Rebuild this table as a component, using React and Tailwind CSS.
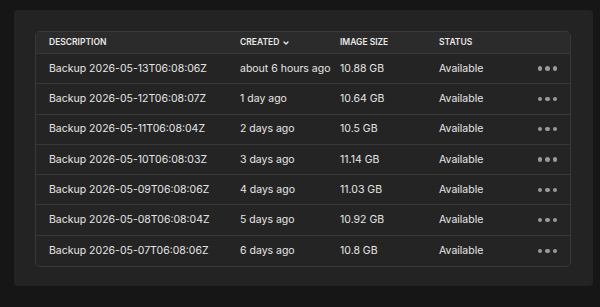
import React from "react";

const rows = [
  ["Backup 2026-05-13T06:08:06Z", "about 6 hours ago", "10.88 GB"],
  ["Backup 2026-05-12T06:08:07Z", "1 day ago", "10.64 GB"],
  ["Backup 2026-05-11T06:08:04Z", "2 days ago", "10.5 GB"],
  ["Backup 2026-05-10T06:08:03Z", "3 days ago", "11.14 GB"],
  ["Backup 2026-05-09T06:08:06Z", "4 days ago", "11.03 GB"],
  ["Backup 2026-05-08T06:08:04Z", "5 days ago", "10.92 GB"],
  ["Backup 2026-05-07T06:08:06Z", "6 days ago", "10.8 GB"],
];

function Dots() {
  return (
    <div className="flex items-center gap-[3px]">
      <span className="w-[4.5px] h-[4.5px] rounded-full bg-[#9a9a9a]" />
      <span className="w-[4.5px] h-[4.5px] rounded-full bg-[#9a9a9a]" />
      <span className="w-[4.5px] h-[4.5px] rounded-full bg-[#9a9a9a]" />
    </div>
  );
}

export default function App() {
  return (
    <div
      className="w-[600px] h-[307px] bg-[#161616] pt-[10px] pl-[14px] pr-[7px]"
      style={{ fontFamily: "Inter, 'Noto Sans', sans-serif" }}
    >
      <div className="h-[276px] rounded-[4px] bg-[#232323] pt-[21px] pl-[21px] pr-[22px]">
        <div className="rounded-[5px] border border-[#383838] bg-[#242424] overflow-hidden">
          <div className="grid grid-cols-[191px_100px_99px_1fr_auto] items-center h-[22px] pl-[13px] pr-[13px] bg-[#2b2b2b] border-b border-[#383838] text-[8.5px] font-semibold text-[#e8e8e8]">
            <div>DESCRIPTION</div>
            <div className="flex items-center gap-[3px]">
              CREATED
              <svg width="8" height="8" viewBox="0 0 24 24" fill="none" stroke="#e8e8e8" strokeWidth="4" strokeLinecap="round" strokeLinejoin="round">
                <path d="M6 9l6 6 6-6" />
              </svg>
            </div>
            <div>IMAGE SIZE</div>
            <div>STATUS</div>
            <div className="w-[20px]" />
          </div>
          {rows.map((r, i) => (
            <div
              key={i}
              className={`grid grid-cols-[191px_100px_99px_1fr_auto] items-center h-[30.3px] pl-[13px] pr-[13px] text-[10.5px] text-[#e6e6e6] ${i < rows.length - 1 ? "border-b border-[#383838]" : ""}`}
            >
              <div>{r[0]}</div>
              <div>{r[1]}</div>
              <div>{r[2]}</div>
              <div>Available</div>
              <Dots />
            </div>
          ))}
        </div>
      </div>
    </div>
  );
}
